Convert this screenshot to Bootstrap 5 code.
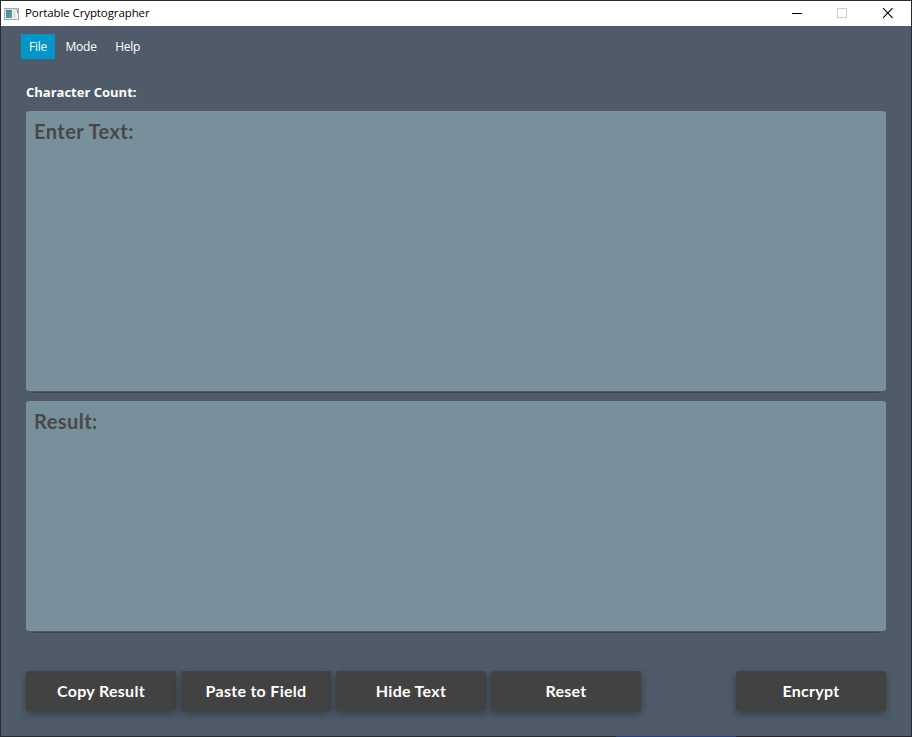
<!DOCTYPE html>
<html lang="en">
<head>
<meta charset="utf-8">
<meta name="viewport" content="width=device-width, initial-scale=1">
<title>Portable Cryptographer</title>
<link href="https://cdn.jsdelivr.net/npm/bootstrap@5.3.0/dist/css/bootstrap.min.css" rel="stylesheet">
<style>
body{background:#505b69;font-family:"Open Sans","Noto Sans",sans-serif;font-size:12px}
.app-window{width:912px;height:737px;border:1px solid #252d31;border-bottom:0;background:#505b69}
.titlebar{height:25px;color:#000;flex:none}
.titlebar .caption-text{font-size:11.5px;letter-spacing:-.1px;line-height:23px;height:25px;margin-left:5px}
.titlebar .app-icon{margin-left:3px}
.win-btn{width:45px;height:25px}
.win-btn svg{display:block}
.menu-strip{height:25px;margin:8px 0 0 20px;gap:2.4px;flex:none}
.menu-strip .nav-link{color:#fff;font-size:12px;line-height:25px;padding:0 8px;letter-spacing:-.22px;border-radius:0}
.menu-strip .nav-link.active{background:#0096c9}
.workspace{padding:23px 25px 0}
.count-label{font-size:13px;line-height:20px;height:20px;margin-bottom:9px;letter-spacing:0}
.field{position:relative;margin-bottom:10px}
.field::after{content:"";position:absolute;left:7px;right:7px;bottom:-2px;height:1px;background:#424242}
.field textarea,.field textarea:focus{background:#78909b;border:0;border-radius:3px;padding:5px 8px;resize:none;box-shadow:none;display:block;font:700 20px/30px Lato,"Open Sans",sans-serif;letter-spacing:.45px;color:#484848}
.field textarea::placeholder{color:#484848;opacity:1}
.field-in textarea{height:280px}
.field-out textarea{height:230px}
.actions{gap:5px;margin-top:40px}
.actions .btn{width:150px;height:40px;padding:0;border:0;border-radius:3px;background:#424242;color:#fff;font:700 16px/40px Lato,"Open Sans",sans-serif;letter-spacing:.3px;box-shadow:0 3px 9px rgba(0,0,0,.36)}
.edge{height:1px;flex:none;background:linear-gradient(90deg,#252d31 615px,#28427b 615px,#28427b 735px,#282429 735px)}
</style>
</head>
<body class="overflow-hidden">
<div class="app-window d-flex flex-column">
  <header class="titlebar bg-white d-flex align-items-center">
    <svg class="app-icon" width="16" height="16" viewBox="0 0 16 16" shape-rendering="crispEdges" aria-hidden="true">
      <defs><linearGradient id="pane" x2="1" y2="1"><stop stop-color="#4c7da8"/><stop offset="1" stop-color="#55aa7f"/></linearGradient></defs>
      <path fill="#a4a9ae" d="M0 2h15v12H0z"/><path fill="#f4f4f4" d="M1 4h13v9H1z"/>
      <path fill="#d5d8dc" d="M1 3h13v1H1z"/><path fill="url(#pane)" d="M2 4h6v8H2z"/>
      <path fill="#e2e5e5" d="M9 4h3v8H9z"/><path fill="#79848c" d="M13 4h1v3h-1z"/>
    </svg>
    <span class="caption-text me-auto">Portable Cryptographer</span>
    <span class="win-btn"><svg width="45" height="25" shape-rendering="crispEdges"><path d="M16 12h10v1H16z"/></svg></span>
    <span class="win-btn"><svg width="45" height="25" shape-rendering="crispEdges"><path d="M16.500 7.500h9v9h-9z" fill="none" stroke="#ccc"/></svg></span>
    <span class="win-btn"><svg width="45" height="25"><path d="M17 7.200l9.600 9.600M26.600 7.200L17 16.800" fill="none" stroke="#000" stroke-width="1.100"/></svg></span>
  </header>
  <nav class="menu-strip nav">
    <a class="nav-link active" href="#">File</a>
    <a class="nav-link" href="#">Mode</a>
    <a class="nav-link" href="#">Help</a>
  </nav>
  <main class="workspace flex-grow-1">
    <div class="count-label fw-bold text-white"><span>Character Count:</span></div>
    <div class="field field-in"><textarea class="form-control" placeholder="Enter Text:" spellcheck="false"></textarea></div>
    <div class="field field-out"><textarea class="form-control" placeholder="Result:" readonly></textarea></div>
    <div class="actions d-flex">
      <button class="btn" type="button">Copy Result</button>
      <button class="btn" type="button">Paste to Field</button>
      <button class="btn" type="button">Hide Text</button>
      <button class="btn" type="button">Reset</button>
      <button class="btn ms-auto" type="button">Encrypt</button>
    </div>
  </main>
  <div class="edge"></div>
</div>
<script src="https://cdn.jsdelivr.net/npm/bootstrap@5.3.0/dist/js/bootstrap.bundle.min.js"></script>
</body>
</html>
